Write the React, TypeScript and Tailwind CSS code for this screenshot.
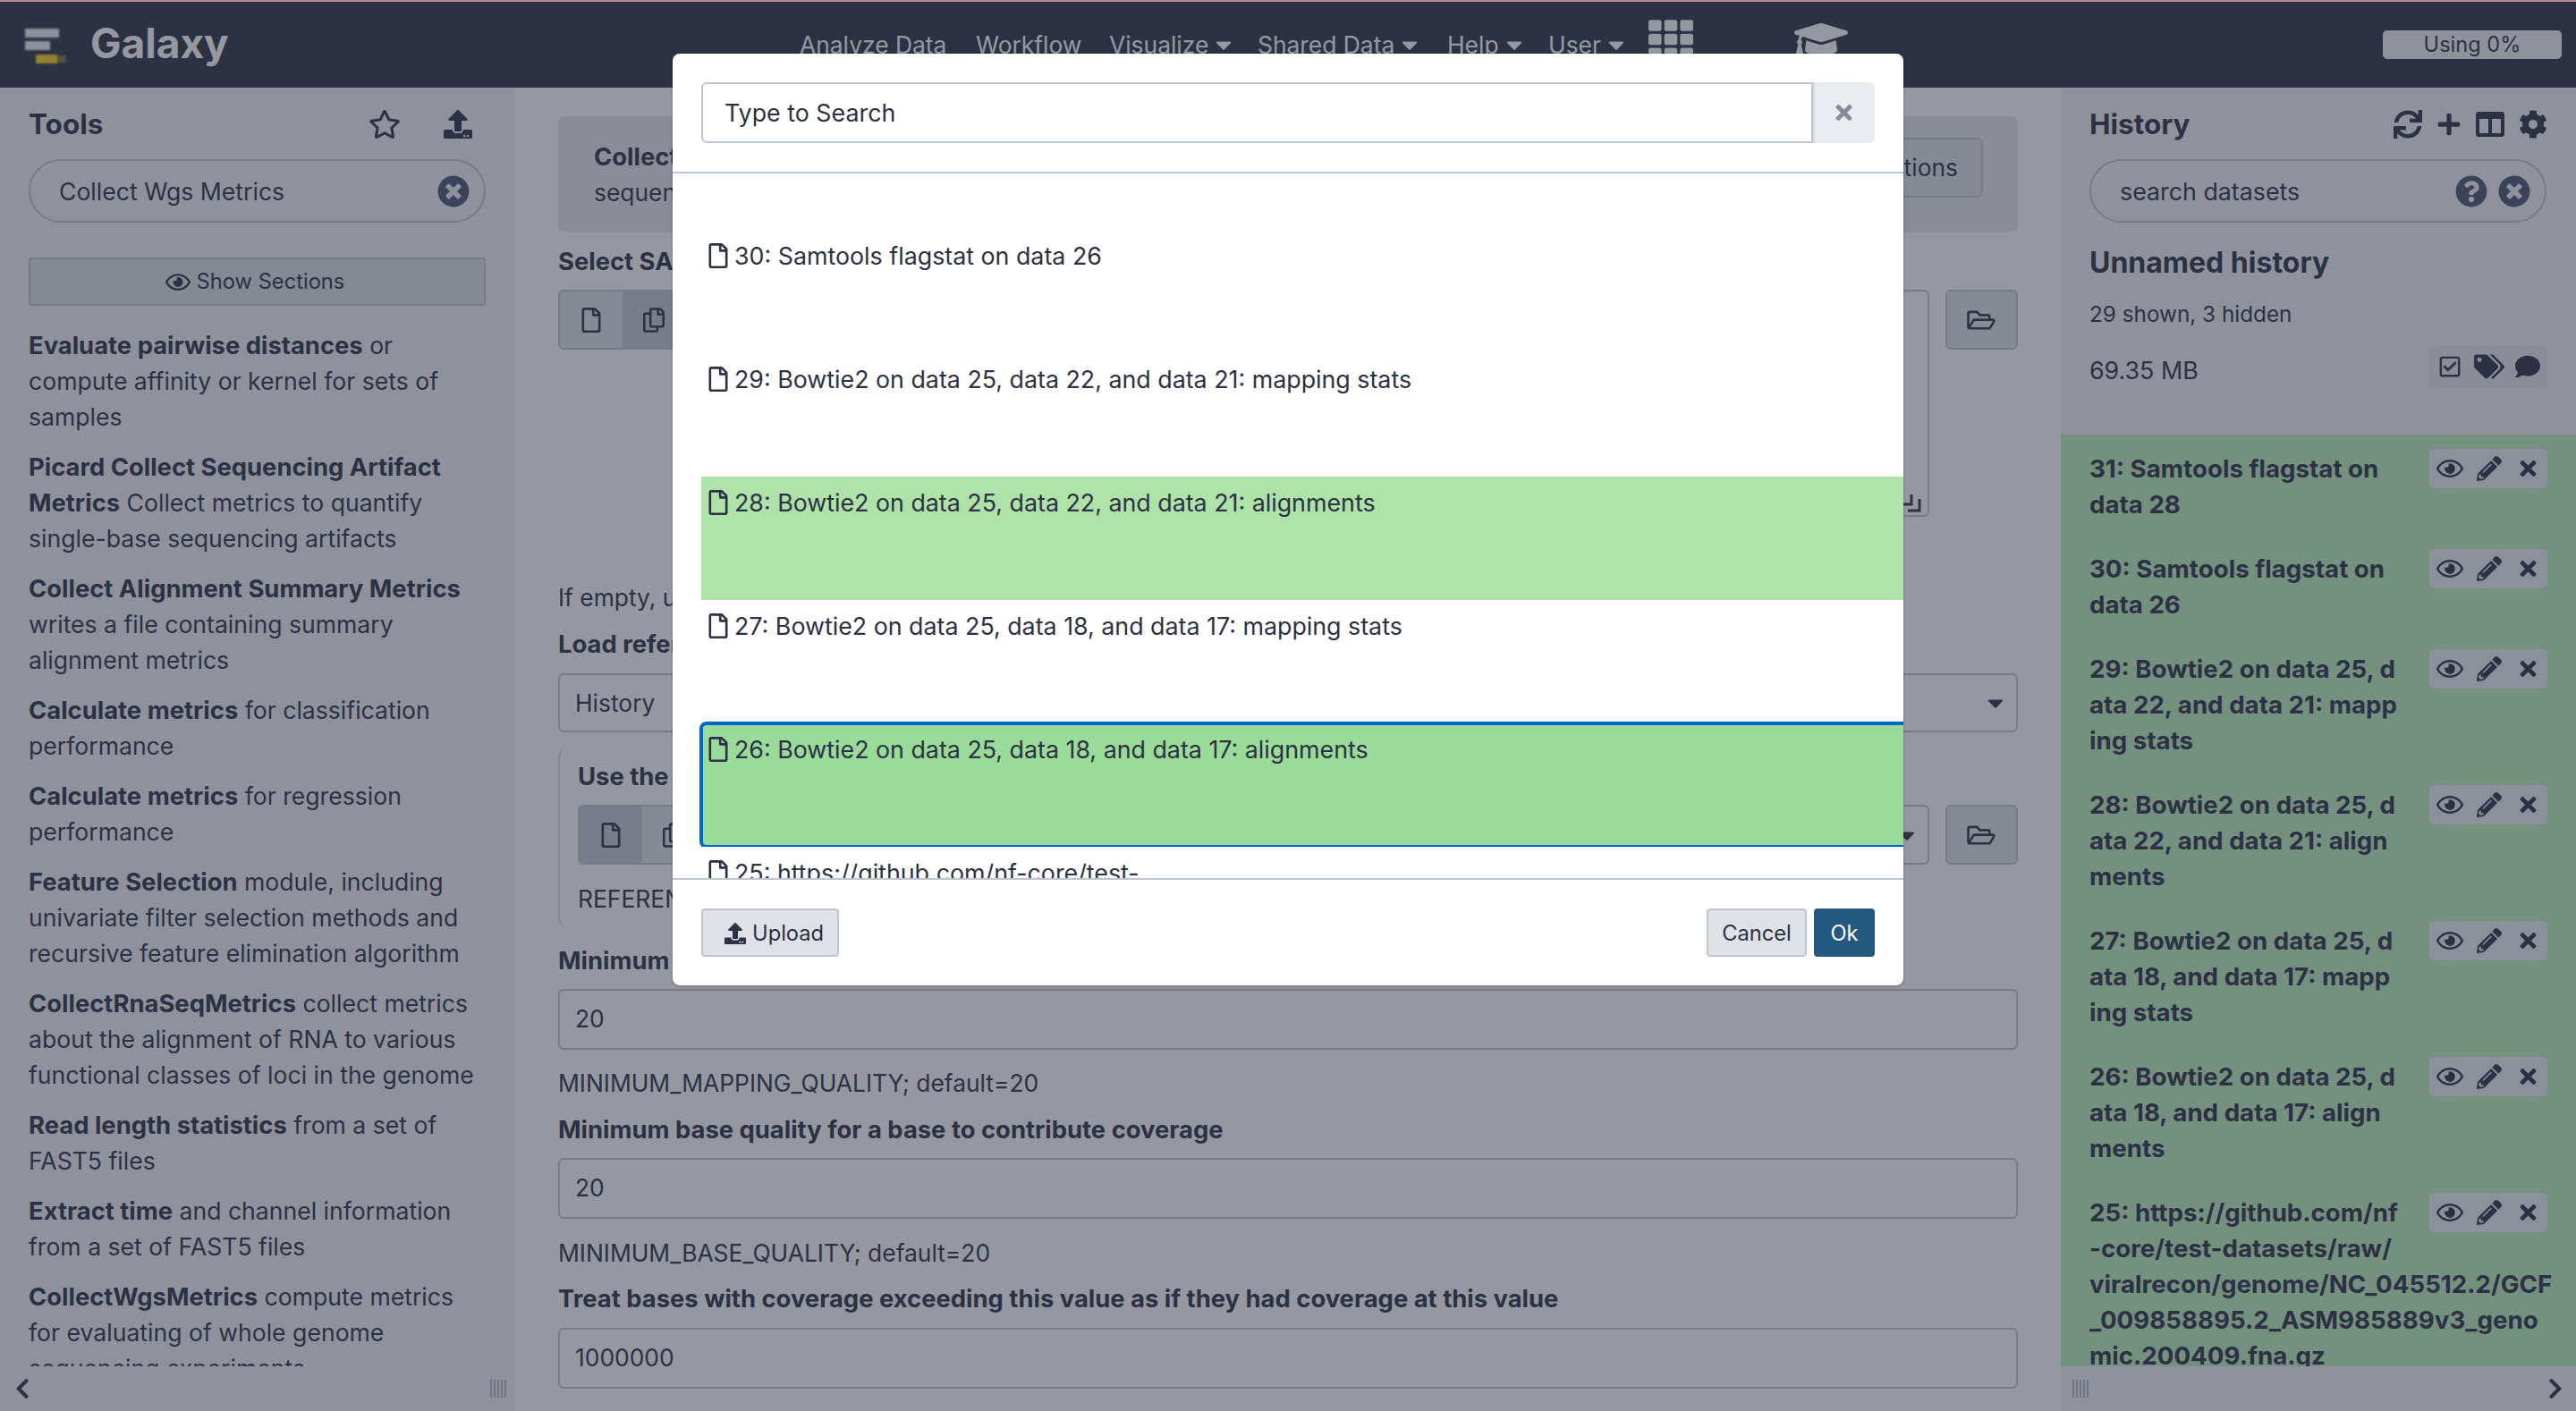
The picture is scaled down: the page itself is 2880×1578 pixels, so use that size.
import React from 'react'
import {
  FaCaretDown, FaChevronLeft, FaChevronRight, FaCog, FaColumns, FaComment, FaGraduationCap, FaPencilAlt, FaPlus,
  FaQuestionCircle, FaRegCheckSquare, FaRegCopy, FaRegEye, FaRegFile, FaRegFolderOpen, FaRegStar, FaSync, FaTags,
  FaTh, FaTimes, FaTimesCircle, FaUpload,
} from 'react-icons/fa'

const toolHits: [string, string][] = [
  ['Evaluate pairwise distances', ' or compute affinity or kernel for sets of samples'],
  ['Picard Collect Sequencing Artifact Metrics', ' Collect metrics to quantify single-base sequencing artifacts'],
  ['Collect Alignment Summary Metrics', ' writes a file containing summary alignment metrics'],
  ['Calculate metrics', ' for classification performance'],
  ['Calculate metrics', ' for regression performance'],
  ['Feature Selection', ' module, including univariate filter selection methods and recursive feature elimination algorithm'],
  ['CollectRnaSeqMetrics', ' collect metrics about the alignment of RNA to various functional classes of loci in the genome'],
  ['Read length statistics', ' from a set of FAST5 files'],
  ['Extract time', ' and channel information from a set of FAST5 files'],
  ['CollectWgsMetrics', ' compute metrics for evaluating of whole genome sequencing experiments'],
]

const datasets: string[][] = [
  ['31: Samtools flagstat on', 'data 28'],
  ['30: Samtools flagstat on', 'data 26'],
  ['29: Bowtie2 on data 25, d', 'ata 22, and data 21: mapp', 'ing stats'],
  ['28: Bowtie2 on data 25, d', 'ata 22, and data 21: align', 'ments'],
  ['27: Bowtie2 on data 25, d', 'ata 18, and data 17: mapp', 'ing stats'],
  ['26: Bowtie2 on data 25, d', 'ata 18, and data 17: align', 'ments'],
  ['25: https://github.com/nf', '-core/test-datasets/raw/', 'viralrecon/genome/NC_045512.2/GCF', '_009858895.2_ASM985889v3_geno', 'mic.200409.fna.gz'],
]

const dialogRows = [
  { label: '30: Samtools flagstat on data 26', tone: 'bg-white' },
  { label: '29: Bowtie2 on data 25, data 22, and data 21: mapping stats', tone: 'bg-white' },
  { label: '28: Bowtie2 on data 25, data 22, and data 21: alignments', tone: 'bg-[#aee2a9]' },
  { label: '27: Bowtie2 on data 25, data 18, and data 17: mapping stats', tone: 'bg-white' },
  { label: '26: Bowtie2 on data 25, data 18, and data 17: alignments', tone: 'bg-[#9adb9a]' },
  { label: '25: https://github.com/nf-core/test-', tone: 'bg-white' },
]

function NavItem({ label, caret = false, className = '' }: { label: string; caret?: boolean; className?: string }) {
  return (
    <span className={`flex items-center gap-[8px] ${className}`}>
      {label}
      {caret && <FaCaretDown className="w-[18px] h-[28px]" />}
    </span>
  )
}

function Masthead() {
  return (
    <header className="relative h-[98px] shrink-0 bg-[#2c3143] text-white">
      <svg viewBox="0 0 50 42" className="absolute left-[27px] top-[31px] w-[50px] h-[42px] blur-[1px]">
        <rect x="1" y="1" width="38" height="10" fill="#f4f4f5" />
        <rect x="1" y="15" width="28" height="10" fill="#f4f4f5" />
        <rect x="13" y="30" width="24" height="10" fill="#ffd21e" />
        <rect x="37" y="31" width="10" height="8" fill="#ffd21e" opacity="0.4" />
      </svg>
      <span className="absolute left-[101px] top-[20px] text-[46px] leading-[56px] font-bold">Galaxy</span>
      <nav className="absolute left-[894px] top-[30px] flex items-center text-[26.4px] leading-[40px]">
        <NavItem label="Analyze Data" className="w-[197px]" />
        <NavItem label="Workflow" className="w-[149px]" />
        <NavItem label="Visualize" caret className="w-[166px]" />
        <NavItem label="Shared Data" caret className="w-[212px]" />
        <NavItem label="Help" caret className="w-[113px]" />
        <NavItem label="User" caret className="w-[113px]" />
      </nav>
      <FaTh className="absolute left-[1843px] top-[19px] w-[50px] h-[50px]" />
      <FaGraduationCap className="absolute left-[2006px] top-[14px] w-[60px] h-[60px]" />
      <div className="absolute left-[2664px] top-[34px] w-[200px] h-[32px] rounded-[5px] bg-[#f2f3f5] text-[#2c3143] text-[23.6px] leading-[32px] text-center">
        Using 0%
      </div>
    </header>
  )
}

function PanelFooter({ side }: { side: 'left' | 'right' }) {
  const grip = (
    <div className="flex gap-[2px] h-[20px]">
      <span className="w-[2px] bg-[#b3b8c4]" />
      <span className="w-[2px] bg-[#b3b8c4]" />
      <span className="w-[2px] bg-[#b3b8c4]" />
      <span className="w-[2px] bg-[#b3b8c4]" />
      <span className="w-[2px] bg-[#b3b8c4]" />
    </div>
  )
  return (
    <div className={`h-[50px] shrink-0 flex items-center justify-between ${side === 'left' ? 'pl-[16px] pr-[10px]' : 'pl-[13px] pr-[14px]'}`}>
      {side === 'left' ? <FaChevronLeft className="w-[18px] h-[26px]" /> : grip}
      {side === 'left' ? grip : <FaChevronRight className="w-[18px] h-[26px]" />}
    </div>
  )
}

function ToolPanel() {
  return (
    <aside className="w-[576px] shrink-0 h-full flex flex-col bg-[#f2f3f5] text-[26.6px]">
      <div className="flex-1 min-h-0 overflow-hidden px-[32px] pt-[21px]">
        <div className="flex items-center justify-between h-[40px]">
          <h2 className="text-[31.5px] leading-[40px] font-bold">Tools</h2>
          <div className="flex items-center gap-[48px] pr-[16px]">
            <FaRegStar className="w-[36px] h-[32px]" />
            <FaUpload className="w-[32px] h-[32px]" />
          </div>
        </div>
        <div className="mt-[19px] h-[71px] w-[511px] rounded-full border-2 border-[#bdc6d0] bg-[#f2f3f5] flex items-center justify-between pl-[32px] pr-[16px]">
          <span>Collect Wgs Metrics</span>
          <FaTimesCircle className="w-[36px] h-[36px] text-[#4b5472]" />
        </div>
        <button className="mt-[39px] w-[511px] h-[54px] rounded-[4px] border-2 border-[#bdc6d0] bg-[#dde0e5] flex items-center justify-center gap-[7px] pr-[5px] text-[23.7px]">
          <FaRegEye className="w-[28px] h-[25px]" />
          Show Sections
        </button>
        <div className="mt-[24px] w-[511px]">
          {toolHits.map(([name, rest], i) => (
            <p key={i} className="mb-[16px]">
              <b className="font-bold text-[27.4px]">{name}</b>
              {rest}
            </p>
          ))}
        </div>
      </div>
      <PanelFooter side="left" />
    </aside>
  )
}

function FieldLabel({ children }: { children: React.ReactNode }) {
  return <div className="font-bold text-[27.4px] h-[40px]">{children}</div>
}

function TextField({ value }: { value: string }) {
  return (
    <div className="mt-[12px] h-[68px] rounded-[6px] border-2 border-[#bdc6d0] flex items-center px-[17px] pb-[2px]">{value}</div>
  )
}

function SourceButtons({ active }: { active: number }) {
  return (
    <div className="flex h-[67px] shrink-0 rounded-[6px] border-2 border-[#bdc6d0] overflow-hidden">
      <div className={`w-[70px] flex items-center justify-center ${active === 0 ? 'bg-[#c2c9d1]' : 'bg-[#dee2e6]'}`}>
        <FaRegFile className="w-[22px] h-[28px]" />
      </div>
      <div className={`w-[70px] flex items-center justify-center ${active === 1 ? 'bg-[#c2c9d1]' : 'bg-[#dee2e6]'}`}>
        <FaRegCopy className="w-[24px] h-[28px]" />
      </div>
    </div>
  )
}

function FolderButton() {
  return (
    <button className="w-[81px] h-[67px] shrink-0 rounded-[6px] border-2 border-[#bdc6d0] bg-[#dee2e6] flex items-center justify-center pr-[2px]">
      <FaRegFolderOpen className="w-[32px] h-[28px]" />
    </button>
  )
}

function ToolForm() {
  return (
    <main className="flex-1 min-w-0 h-full overflow-hidden bg-white px-[48px] pt-[32px] text-[26.4px]">
      <div className="h-[130px] rounded-[8px] bg-[#e8e9ec] px-[40px] flex items-center justify-between">
        <div>
          <div className="font-bold text-[27.4px]">Collect Wgs Metrics compute metrics for evaluating of whole genome</div>
          <div>sequencing experiments (Galaxy Version 2.18.2.2)</div>
        </div>
        <button className="-mt-[16px] h-[67px] rounded-[6px] border-2 border-[#bdc6d0] bg-[#dee2e6] px-[26px] -mr-[1px]">Options</button>
      </div>

      <div className="mt-[12px]"><FieldLabel>Select SAM/BAM dataset or dataset collection</FieldLabel></div>
      <div className="mt-[12px] flex items-start gap-[18px]">
        <SourceButtons active={1} />
        <div className="flex-1 h-[254px] rounded-[6px] border-2 border-[#bdc6d0] relative">
          <svg viewBox="0 0 22 22" className="absolute right-[6px] bottom-[2px] w-[22px] h-[22px]">
            <path d="M10 1v11H1M19 6v13H6" fill="none" stroke="#2c3143" strokeWidth="3" />
          </svg>
        </div>
        <FolderButton />
      </div>
      <div className="mt-[70px] h-[40px]">If empty, upload or import a SAM/BAM dataset</div>
      <div className="mt-[12px]"><FieldLabel>Load reference genome from</FieldLabel></div>
      <div className="mt-[13px] h-[66px] rounded-[6px] border-2 border-[#bdc6d0] flex items-center justify-between pl-[17px] pr-[14px]">
        History
        <FaCaretDown className="w-[18px] h-[28px]" />
      </div>

      <div className="mt-[16px] h-[203px] rounded-l-[12px] border-l-2 border-[#d8dde3] pl-[20px] pt-[13px]">
        <FieldLabel>Use the following dataset as the reference sequence</FieldLabel>
        <div className="mt-[12px] flex items-start gap-[18px]">
          <SourceButtons active={0} />
          <div className="flex-1 h-[67px] rounded-[6px] border-2 border-[#bdc6d0] flex items-center justify-end pr-[14px]">
            <FaCaretDown className="w-[18px] h-[28px]" />
          </div>
          <FolderButton />
        </div>
        <div className="mt-[18px]">REFERENCE_SEQUENCE; default=</div>
      </div>

      <div className="mt-[16px]"><FieldLabel>Minimum mapping quality for a base to contribute coverage</FieldLabel></div>
      <TextField value="20" />
      <div className="mt-[17px] h-[40px]">MINIMUM_MAPPING_QUALITY; default=20</div>
      <div className="mt-[12px]"><FieldLabel>Minimum base quality for a base to contribute coverage</FieldLabel></div>
      <TextField value="20" />
      <div className="mt-[18px] h-[40px]">MINIMUM_BASE_QUALITY; default=20</div>
      <div className="mt-[11px]"><FieldLabel>Treat bases with coverage exceeding this value as if they had coverage at this value</FieldLabel></div>
      <div className="pt-[1px]"><TextField value="1000000" /></div>
    </main>
  )
}

function HistoryPanel() {
  return (
    <aside className="w-[576px] shrink-0 h-full flex flex-col bg-[#f2f3f5]">
      <div className="h-[388px] shrink-0 px-[32px] pt-[21px]">
        <div className="flex items-center justify-between h-[40px]">
          <h2 className="text-[31.5px] leading-[40px] font-bold">History</h2>
          <div className="flex items-center gap-[16px]">
            <FaSync className="w-[32px] h-[32px]" />
            <FaPlus className="w-[28px] h-[28px]" />
            <FaColumns className="w-[32px] h-[32px]" />
            <FaCog className="w-[32px] h-[32px]" />
          </div>
        </div>
        <div className="mt-[19px] h-[71px] w-[511px] rounded-full border-2 border-[#bdc6d0] flex items-center justify-between pl-[32px] pr-[16px]">
          <span>search datasets</span>
          <div className="flex gap-[12px]">
            <FaQuestionCircle className="w-[36px] h-[36px] text-[#4b5472]" />
            <FaTimesCircle className="w-[36px] h-[36px] text-[#4b5472]" />
          </div>
        </div>
        <div className="mt-[25px] text-[32px] leading-[40px] font-bold">Unnamed history</div>
        <div className="mt-[17px] text-[24.3px] leading-[40px]">29 shown, 3 hidden</div>
        <div className="mt-[23px] flex items-center justify-between h-[40px]">
          <span>69.35 MB</span>
          <div className="-mt-[8px] flex items-center h-[46px] w-[132px] rounded-[6px] bg-[#e8e9ec] pl-[11px]">
            <FaRegCheckSquare className="w-[24px] h-[26px]" />
            <FaTags className="ml-[15px] w-[34px] h-[28px]" />
            <FaComment className="ml-[12px] w-[28px] h-[28px]" />
          </div>
        </div>
      </div>
      <div className="h-[1042px] flex-1 min-h-0 overflow-hidden bg-[#bcefbb] pl-[32px] pr-[32px] pt-[18px]">
        {datasets.map((lines, i) => (
          <div key={i} className="relative mb-[32px] font-bold text-[27.7px]">
            {lines.map(line => (
              <div key={line} className="whitespace-nowrap">{line}</div>
            ))}
            <div className="absolute right-0 -top-[2px] h-[44px] w-[132px] rounded-[6px] bg-[#eceef1] flex items-center pl-[8px]">
              <FaRegEye className="w-[30px] h-[28px]" />
              <FaPencilAlt className="ml-[15px] w-[28px] h-[28px]" />
              <FaTimes className="ml-[20px] w-[19px] h-[26px]" />
            </div>
          </div>
        ))}
      </div>
      <PanelFooter side="right" />
    </aside>
  )
}

function DataDialog() {
  return (
    <div className="absolute left-[752px] top-[60px] z-20 w-[1376px] h-[1042px] rounded-[8px] bg-white flex flex-col overflow-hidden shadow-[0_1px_3px_rgba(0,0,0,0.3)]">
      <div className="h-[134px] shrink-0 border-b-2 border-[#bdc6d0] px-[32px] pt-[32px]">
        <div className="flex h-[68px] w-[1312px]">
          <div className="flex-1 rounded-l-[6px] border-2 border-[#bdc6d0] flex items-center px-[24px]">Type to Search</div>
          <div className="w-[69px] rounded-r-[6px] bg-[#e9ecef] border-l-2 border-[#d5dae0] flex items-center justify-center">
            <FaTimes className="w-[19px] h-[26px] text-[#868a96] -ml-[2px]" />
          </div>
        </div>
      </div>
      <div className="flex-1 min-h-0 overflow-hidden pl-[32px] pt-[63px]">
        {dialogRows.map((row, i) => (
          <div
            key={row.label}
            className={`relative h-[138px] w-[1400px] pl-[8px] pr-[9px] pt-[9px] ${row.tone} ${i === 4 ? 'outline-4 -outline-offset-2 outline-[#0066cc] rounded-[6px]' : ''}`}
          >
            <span className="flex items-center gap-[7px] whitespace-nowrap">
              <FaRegFile className="w-[22px] h-[28px]" />
              {row.label}
            </span>
          </div>
        ))}
      </div>
      <div className="h-[120px] shrink-0 border-t-2 border-[#bdc6d0] px-[32px] pt-[32px] flex items-start justify-between text-[23.7px]">
        <button className="h-[54px] w-[154px] rounded-[4px] border-2 border-[#bdc6d0] bg-[#dee1e6] flex items-center gap-[7px] pl-[24px] pt-[2px]">
          <FaUpload className="w-[24px] h-[24px]" />
          Upload
        </button>
        <div className="flex gap-[8px]">
          <button className="h-[54px] w-[112px] rounded-[4px] border-2 border-[#bdc6d0] bg-[#dee1e6] pt-[2px]">Cancel</button>
          <button className="h-[54px] w-[68px] rounded-[4px] bg-[#25587e] text-white pt-[2px]">Ok</button>
        </div>
      </div>
    </div>
  )
}

export default function App() {
  return (
    <div className="relative h-[1578px] w-[2880px] overflow-hidden flex flex-col bg-white text-[#2c3143] text-[26.8px] leading-[40px] [font-family:Inter,sans-serif]">
      <Masthead />
      <div className="flex flex-1 min-h-0">
        <ToolPanel />
        <ToolForm />
        <HistoryPanel />
      </div>
      {/* modal backdrop */}
      <div className="absolute inset-0 z-10 bg-[#2c3143]/50" />
      <div className="absolute left-0 right-0 top-0 h-[2px] z-10 bg-[#b98a97]" />
      <DataDialog />
    </div>
  )
}
